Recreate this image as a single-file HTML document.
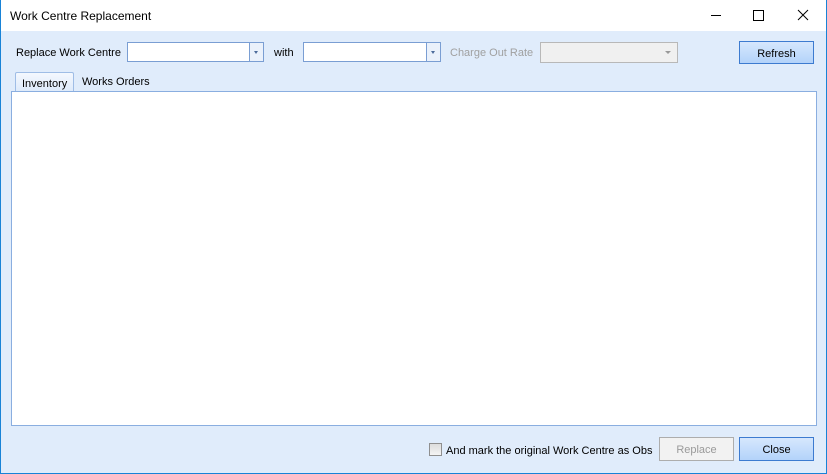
<!DOCTYPE html><html><head><style>
body{margin:0;width:827px;height:474px;overflow:hidden;font-family:"Liberation Sans",sans-serif;font-size:11px;}
.win{position:absolute;left:0;top:0;width:825px;height:473px;border:1px solid #1883d7;border-top:none;background:#e0ecfb;}
.title{position:absolute;left:0;top:0;width:825px;height:31px;background:#fff;}
.a{position:absolute;}
.cb{position:absolute;height:18px;border:1px solid #7a9ed3;background:#fff;}
.cb i{position:absolute;right:0;top:0;width:13px;height:18px;border-left:1px solid #7a9ed3;background:#eaf1fb;}
.cb i:after{content:"";position:absolute;left:4px;top:8px;border:2.5px solid transparent;border-top:3px solid #4a6a9a;}
.btn{position:absolute;height:21px;border:1px solid #3d7bd0;background:linear-gradient(#d6e7fd,#b3d3fa);text-align:center;line-height:21px;}
</style></head><body><div class="win">
<div class="title"><span class="a" style="left:9px;top:9px;font-size:12px">Work Centre Replacement</span>
<svg class="a" style="left:700px;top:0" width="125" height="31"><path d="M10 15.5h10" stroke="#000"/><rect x="52.5" y="10.5" width="10" height="10" fill="none" stroke="#000"/><path d="M97 10l10 10M107 10l-10 10" stroke="#000"/></svg></div>
<span class="a" style="left:15px;top:47px">Replace Work Centre</span>
<div class="cb" style="left:126px;top:42px;width:135px"><i></i></div>
<span class="a" style="left:273px;top:47px">with</span>
<div class="cb" style="left:302px;top:42px;width:136px"><i></i></div>
<span class="a" style="left:449px;top:47px;color:#a0a0a0">Charge Out Rate</span>
<div class="a" style="left:539px;top:42px;width:136px;height:19px;border:1px solid #b8b8b8;background:#f0f0f0"><svg class="a" style="right:6px;top:8px" width="6" height="4"><path d="M0 0h6L3 3z" fill="#999"/></svg></div>
<div class="btn" style="left:738px;top:41px;width:73px;line-height:24px">Refresh</div>
<div class="a" style="left:14px;top:72px;width:57px;height:20px;border:1px solid #9fbde6;border-bottom:none;border-radius:2px 2px 0 0;background:linear-gradient(#f4f8fe,#dce9fa)"><span class="a" style="left:6px;top:5px">Inventory</span></div>
<span class="a" style="left:81px;top:76px">Works Orders</span>
<div class="a" style="left:10px;top:91px;width:804px;height:333px;background:#fff;border:1px solid #8aaee0"></div>
<div class="a" style="left:428px;top:443px;width:11px;height:11px;border:1px solid #8f8f8f;background:linear-gradient(#ddd,#f4f4f4)"></div>
<span class="a" style="left:445px;top:445px">And mark the original Work Centre as Obs</span>
<div class="a" style="left:658px;top:437px;width:73px;height:22px;border:1px solid #adadad;background:#f2f2f2;color:#9a9a9a;text-align:center;line-height:25px">Replace</div>
<div class="btn" style="left:738px;top:437px;width:73px;height:22px;line-height:25px">Close</div>
</div></body></html>
